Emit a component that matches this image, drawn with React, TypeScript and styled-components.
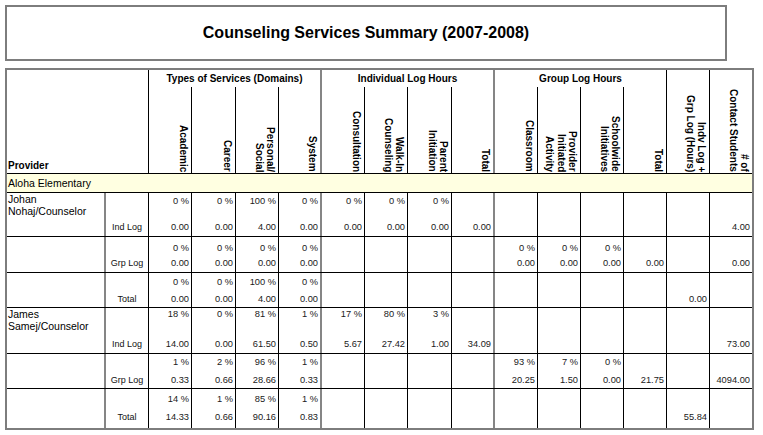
import React from 'react';
import styled, { createGlobalStyle } from 'styled-components';

const FONT = '"Liberation Sans", Arial, Helvetica, sans-serif';

const GlobalStyle = createGlobalStyle`
  *, *::before, *::after { box-sizing: border-box; }
  html, body { margin: 0; padding: 0; background: #fff; }
  body { font-family: ${FONT}; color: #000; }
`;

const COLS = '99px 43px 43px 44px 43px 43px 43px 43px 44px 43px 43px 43px 43px 43px 43px 42px';

type Edge = 'black' | 'gray' | 'none';

const edgeCss = (e: Edge) =>
  e === 'gray' ? '2px solid #858585' : e === 'black' ? '1px solid #000' : 'none';

const Page = styled.div`
  padding: 5px 0 0 5px;
  width: 763px;
  height: 435px;
  overflow: hidden;
`;

const TitleBox = styled.div`
  width: 722px;
  height: 56px;
  border: 2px solid #7d7d7d;
  display: flex;
  align-items: center;
  justify-content: center;
  font: bold 16px ${FONT};
  color: #000;
`;

const Report = styled.div`
  margin-top: 7px;
  width: max-content;
  border: 2px solid #7d7d7d;
`;

const HeadGrid = styled.div`
  display: grid;
  grid-template-columns: ${COLS};
  grid-template-rows: 17px 86px;
  border-bottom: 1px solid #000;
`;

const ProviderHead = styled.div`
  grid-column: 1 / 3;
  grid-row: 1 / 3;
  border-right: 1px solid #000;
  display: flex;
  align-items: flex-end;
  padding: 0 0 1px 1px;
  font: bold 10px/12px ${FONT};
`;

const GroupHead = styled.div<{ $col: string; $edge: Edge }>`
  grid-column: ${(p) => p.$col};
  grid-row: 1;
  border-right: ${(p) => edgeCss(p.$edge)};
  text-align: center;
  font: bold 10px/17px ${FONT};
  white-space: nowrap;
`;

const SubHead = styled.div<{ $edge: Edge; $col?: number }>`
  grid-row: ${(p) => (p.$col ? '1 / 3' : '2')};
  grid-column: ${(p) => (p.$col ? String(p.$col) : 'auto')};
  border-right: ${(p) => edgeCss(p.$edge)};
  display: flex;
  justify-content: flex-end;
  align-items: flex-end;
  padding: 0 2px 1px 0;
  overflow: hidden;
`;

const VText = styled.span`
  writing-mode: vertical-rl;
  text-align: end;
  white-space: nowrap;
  font: bold 10px/11.5px ${FONT};
`;

const Band = styled.div`
  height: 19px;
  background: #ffffe1;
  border-bottom: 1px solid #000;
  padding-left: 1px;
  font: 10.5px/18px ${FONT};
`;

const BodyRow = styled.div<{ $h: number; $last?: boolean }>`
  display: grid;
  grid-template-columns: ${COLS};
  height: ${(p) => p.$h}px;
  border-bottom: ${(p) => (p.$last ? 'none' : '1px solid #000')};
`;

const NameCell = styled.div`
  border-right: 2px solid #858585;
  padding: 0 0 0 1px;
  font: 10.5px/12px ${FONT};
`;

const LabelCell = styled.div<{ $pb: number }>`
  border-right: 1px solid #000;
  display: flex;
  align-items: flex-end;
  justify-content: center;
  padding-bottom: ${(p) => p.$pb}px;
  font: 9px/11px ${FONT};
  color: #111;
`;

const DataCell = styled.div<{ $edge: Edge; $pt: number; $pb: number }>`
  border-right: ${(p) => edgeCss(p.$edge)};
  display: flex;
  flex-direction: column;
  justify-content: space-between;
  align-items: flex-end;
  padding: ${(p) => p.$pt}px 2px ${(p) => p.$pb}px 0;
  font: 9.3px/11px ${FONT};
  color: #1a1a1a;
`;

const Line = styled.span`
  min-height: 11px;
  white-space: nowrap;
`;

type Cell = [string, string] | null;

interface RowDef {
  name?: string[];
  label: string;
  h: number;
  pt: number;
  pb: number;
  cells: Cell[];
  last?: boolean;
}

const E = null;

const rows: RowDef[] = [
  {
    name: ['Johan', 'Nohaj/Counselor'],
    label: 'Ind Log',
    h: 44,
    pt: 3,
    pb: 3,
    cells: [
      ['0 %', '0.00'], ['0 %', '0.00'], ['100 %', '4.00'], ['0 %', '0.00'],
      ['0 %', '0.00'], ['0 %', '0.00'], ['0 %', '0.00'], ['', '0.00'],
      E, E, E, E, E, ['', '4.00'],
    ],
  },
  {
    label: 'Grp Log',
    h: 36,
    pt: 6,
    pb: 3,
    cells: [
      ['0 %', '0.00'], ['0 %', '0.00'], ['0 %', '0.00'], ['0 %', '0.00'],
      E, E, E, E,
      ['0 %', '0.00'], ['0 %', '0.00'], ['0 %', '0.00'], ['', '0.00'],
      E, ['', '0.00'],
    ],
  },
  {
    label: 'Total',
    h: 35,
    pt: 4,
    pb: 2,
    cells: [
      ['0 %', '0.00'], ['0 %', '0.00'], ['100 %', '4.00'], ['0 %', '0.00'],
      E, E, E, E, E, E, E, E, ['', '0.00'], E,
    ],
  },
  {
    name: ['James', 'Samej/Counselor'],
    label: 'Ind Log',
    h: 46,
    pt: 1,
    pb: 3,
    cells: [
      ['18 %', '14.00'], ['0 %', '0.00'], ['81 %', '61.50'], ['1 %', '0.50'],
      ['17 %', '5.67'], ['80 %', '27.42'], ['3 %', '1.00'], ['', '34.09'],
      E, E, E, E, E, ['', '73.00'],
    ],
  },
  {
    label: 'Grp Log',
    h: 35,
    pt: 3,
    pb: 2,
    cells: [
      ['1 %', '0.33'], ['2 %', '0.66'], ['96 %', '28.66'], ['1 %', '0.33'],
      E, E, E, E,
      ['93 %', '20.25'], ['7 %', '1.50'], ['0 %', '0.00'], ['', '21.75'],
      E, ['', '4094.00'],
    ],
  },
  {
    label: 'Total',
    h: 39,
    pt: 5,
    pb: 5,
    last: true,
    cells: [
      ['14 %', '14.33'], ['1 %', '0.66'], ['85 %', '90.16'], ['1 %', '0.83'],
      E, E, E, E, E, E, E, E, ['', '55.84'], E,
    ],
  },
];

const dataEdge = (i: number): Edge => (i === 3 || i === 7 ? 'gray' : i === 13 ? 'none' : 'black');

const subHeads: { lines: string[]; edge: Edge }[] = [
  { lines: ['Academic'], edge: 'black' },
  { lines: ['Career'], edge: 'black' },
  { lines: ['Personal/', 'Social'], edge: 'black' },
  { lines: ['System'], edge: 'gray' },
  { lines: ['Consultation'], edge: 'black' },
  { lines: ['Walk-In', 'Counseling'], edge: 'black' },
  { lines: ['Parent', 'Initiation'], edge: 'black' },
  { lines: ['Total'], edge: 'gray' },
  { lines: ['Classroom'], edge: 'black' },
  { lines: ['Provider', 'Initiated', 'Activity'], edge: 'black' },
  { lines: ['Schoolwide', 'Initiatives'], edge: 'black' },
  { lines: ['Total'], edge: 'black' },
];

const Vertical: React.FC<{ lines: string[] }> = ({ lines }) => (
  <VText>
    {lines.map((l, i) => (
      <React.Fragment key={i}>
        {i > 0 && <br />}
        {l}
      </React.Fragment>
    ))}
  </VText>
);

export default function App() {
  return (
    <>
      <GlobalStyle />
      <Page>
        <TitleBox>Counseling Services Summary (2007-2008)</TitleBox>
        <Report>
          <HeadGrid>
            <ProviderHead>Provider</ProviderHead>
            <GroupHead $col="3 / 7" $edge="gray">Types of Services (Domains)</GroupHead>
            <GroupHead $col="7 / 11" $edge="gray">Individual Log Hours</GroupHead>
            <GroupHead $col="11 / 15" $edge="black">Group Log Hours</GroupHead>
            <SubHead $edge="black" $col={15}>
              <Vertical lines={['Indv Log +', 'Grp Log (Hours)']} />
            </SubHead>
            <SubHead $edge="none" $col={16}>
              <Vertical lines={['# of', 'Contact Students']} />
            </SubHead>
            {subHeads.map((s, i) => (
              <SubHead key={i} $edge={s.edge}>
                <Vertical lines={s.lines} />
              </SubHead>
            ))}
          </HeadGrid>
          <Band>Aloha Elementary</Band>
          {rows.map((r, ri) => (
            <BodyRow key={ri} $h={r.h} $last={r.last}>
              <NameCell>
                {r.name?.map((n, i) => (
                  <div key={i}>{n}</div>
                ))}
              </NameCell>
              <LabelCell $pb={r.pb}>{r.label}</LabelCell>
              {r.cells.map((c, ci) => (
                <DataCell key={ci} $edge={dataEdge(ci)} $pt={r.pt} $pb={r.pb}>
                  <Line>{c ? c[0] : ''}</Line>
                  <Line>{c ? c[1] : ''}</Line>
                </DataCell>
              ))}
            </BodyRow>
          ))}
        </Report>
      </Page>
    </>
  );
}
